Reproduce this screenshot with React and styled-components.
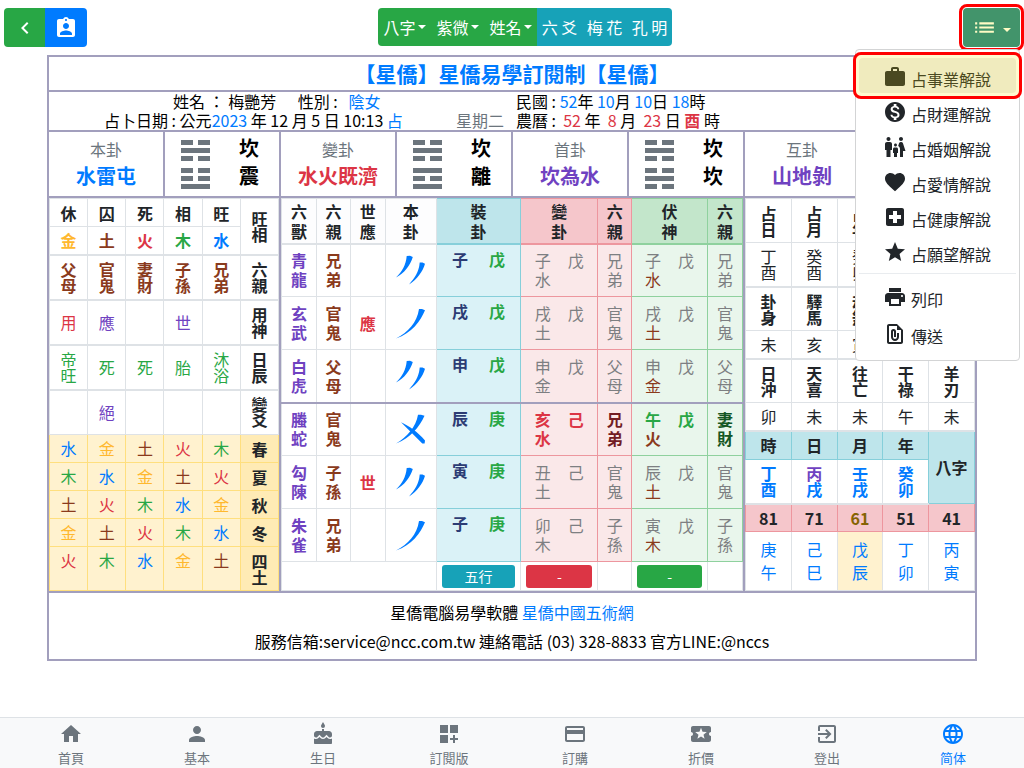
import React from "react";
import styled, { createGlobalStyle } from "styled-components";
import {
  MdChevronLeft,
  MdAssignmentInd,
  MdList,
  MdWork,
  MdMonetizationOn,
  MdFamilyRestroom,
  MdFavorite,
  MdLocalHospital,
  MdStar,
  MdPrint,
  MdOutlineFilePresent,
  MdHome,
  MdPerson,
  MdCake,
  MdDashboardCustomize,
  MdPayment,
  MdLocalActivity,
  MdExitToApp,
  MdLanguage,
} from "react-icons/md";

const colors = {
  blue: "#007bff",
  green: "#28a745",
  red: "#dc3545",
  gold: "#ffb82e",
  brown: "#8a3a1c",
  purple: "#6f42c1",
  navy: "#2c3c74",
  teal: "#17a2b8",
  gray: "#6c757d",
  mute: "#7d7f82",
  ink: "#212529",
  maroon: "#721c24",
  forest: "#155724",
  olive: "#856404",
  frame: "#a29fbd",
};

const tones = {
  plain: { bg: "transparent", line: "#dee2e6" },
  head: { bg: "#fdfdfe", line: "#dee2e6" },
  info: { bg: "#bee5eb", line: "#86cfda" },
  infoSoft: { bg: "#daf2f7", line: "#86cfda" },
  danger: { bg: "#f5c6cb", line: "#ed969e" },
  dangerSoft: { bg: "#fae8e9", line: "#ed969e" },
  success: { bg: "#c3e6cb", line: "#8fd19e" },
  successSoft: { bg: "#e9f6ec", line: "#8fd19e" },
  warn: { bg: "#ffebb5", line: "#ffdf7e" },
  warnSoft: { bg: "#fff2cf", line: "#ffdf7e" },
  warnCell: { bg: "#fff2cf", line: "#dee2e6" },
};

const regular = 400;
const strong = 700;

const GlobalStyle = createGlobalStyle`
  *, *::before, *::after { box-sizing: border-box; }
  body {
    margin: 0;
    background: #fff;
    color: #000;
    font-family: "Noto Sans CJK TC", sans-serif;
    font-size: 16px;
    font-weight: ${regular};
    line-height: 24px;
  }
  button { font: inherit; border: 0; margin: 0; cursor: pointer; }
  a { color: ${colors.blue}; text-decoration: none; }
`;

/* ---------- top bar ---------- */

const TopBar = styled.header`
  display: flex;
  justify-content: space-between;
  align-items: flex-start;
  padding: 8px 4px;
`;

const ButtonGroup = styled.div`
  display: flex;
  border-radius: 4px;
  overflow: hidden;
`;

const BarButton = styled.button`
  display: flex;
  align-items: center;
  justify-content: center;
  gap: ${(p) => (p.$wide ? "6px" : "2px")};
  width: ${(p) => p.$width}px;
  height: ${(p) => p.$height || 39}px;
  padding: 0;
  color: ${(p) => p.$color || "#fff"};
  background: ${(p) => p.$bg};
  border-radius: ${(p) => (p.$wide ? "4px" : "0")};
`;

const Caret = styled.span`
  margin-top: ${(p) => (p.$low ? 5 : 0)}px;
  border: 4px solid transparent;
  border-top-color: currentColor;
  border-bottom: 0;
`;

const MenuAnchor = styled.div`
  position: relative;
`;

const Marker = styled.span`
  position: absolute;
  inset: ${(p) => p.$inset};
  border: 3px solid #f00;
  border-radius: 8px;
  background: ${(p) => (p.$tinted ? "rgba(255, 230, 0, 0.19)" : "transparent")};
  pointer-events: none;
`;

const Menu = styled.nav`
  position: absolute;
  top: 41px;
  right: 0;
  z-index: 2;
  width: 165px;
  padding: 8px 3px 10px;
  background: #fff;
  border: 1px solid #d3d4d5;
  border-radius: 4px;
`;

const MenuItem = styled.a`
  position: relative;
  display: flex;
  align-items: flex-end;
  gap: 4px;
  height: ${(p) => (p.$tall ? 37 : 35)}px;
  padding: 0 24px 2px;
  color: ${colors.ink};
  white-space: nowrap;
  border-radius: 4px;
  background: ${(p) => (p.$active ? "#ededea" : "transparent")};
  svg { flex: none; margin-bottom: 2px; }
`;

const Divider = styled.hr`
  height: 1px;
  margin: 5px 0 2px;
  border: 0;
  background: #e9ecef;
`;

/* ---------- chart frame ---------- */

const Frame = styled.main`
  max-width: 930px;
  margin: 0 auto 60px;
  border: 2px solid ${colors.frame};
`;

const Title = styled.h1`
  margin: 0;
  height: 35px;
  font-size: 21px;
  line-height: 33px;
  font-weight: ${strong};
  text-align: center;
  color: ${colors.blue};
  border-bottom: 2px solid ${colors.frame};
`;

const Info = styled.section`
  display: grid;
  grid-template-columns: 1fr 1fr;
  line-height: 19px;
  height: 40px;
  border-bottom: 2px solid ${colors.frame};
`;

const InfoLine = styled.div`
  display: flex;
  white-space: pre;
  padding: 0 8px 0 ${(p) => p.$indent}px;
`;

const Push = styled.span`
  margin-left: auto;
  color: ${colors.gray};
`;

const Ink = styled.span`
  color: ${(p) => colors[p.$c]};
  font-weight: ${(p) => (p.$bold ? strong : "inherit")};
`;

const Hexagrams = styled.section`
  display: grid;
  grid-template-columns: repeat(7, 116fr) 114fr;
  height: 66px;
  border-bottom: 2px solid ${colors.frame};
`;

const HexName = styled.div`
  display: flex;
  flex-direction: column;
  align-items: center;
  justify-content: center;
  gap: 3px;
  padding-bottom: 3px;
  color: ${colors.gray};
  border-right: 2px solid ${colors.frame};
  strong { font-size: 20px; font-weight: ${strong}; color: ${(p) => colors[p.$c]}; }
`;

const HexLines = styled.div`
  display: flex;
  align-items: center;
  justify-content: space-between;
  padding: 0 20px 0 16px;
  border-right: 2px solid ${(p) => (p.$last ? "transparent" : colors.frame)};
`;

const HexWords = styled.div`
  display: flex;
  flex-direction: column;
  padding-bottom: 4px;
  font-size: 20px;
  line-height: 28px;
  font-weight: ${strong};
`;

const Panels = styled.section`
  display: grid;
  grid-template-columns: 232fr 464fr 230fr;
  border-bottom: 2px solid ${colors.frame};
`;

const Panel = styled.div`
  border-right: ${(p) => (p.$last ? 0 : 2)}px solid ${colors.frame};
`;

const Grid = styled.table`
  width: 100%;
  table-layout: fixed;
  border-collapse: collapse;
  color: ${colors.ink};
`;

const Row = styled.tr`
  height: ${(p) => p.$h}px;
`;

const cellStyle = (p) => {
  const t = tones[p.$tone || "plain"];
  return `
    padding: 0;
    text-align: center;
    vertical-align: ${p.$top ? "top" : "middle"};
    line-height: ${p.$lh || 16}px;
    color: ${colors[p.$c || "ink"]};
    background: ${t.bg};
    border: 1px solid ${t.line};
    ${p.$thick ? `border-bottom: 2px solid ${t.line};` : ""}
    ${p.$half ? `border-bottom: 2px solid ${colors.frame};` : ""}
  `;
};

const Th = styled.th`
  ${cellStyle}
  font-weight: ${strong};
`;

const Td = styled.td`
  ${cellStyle}
  font-weight: ${(p) => (p.$bold ? strong : regular)};
`;

const Stack = styled.span`
  display: flex;
  flex-direction: column;
  align-items: center;
`;

const Pair = styled.span`
  display: flex;
  justify-content: center;
  gap: ${(p) => p.$gap}px;
`;

const Badge = styled.button`
  display: block;
  width: calc(100% - 10px);
  height: 23px;
  margin: 0 auto;
  padding: 0;
  font-size: 14px;
  line-height: 23px;
  color: #fff;
  background: ${(p) => colors[p.$bg]};
  border-radius: 3px;
`;

const Contact = styled.footer`
  padding: 5px 0 3px;
  line-height: 29px;
  text-align: center;
  p { margin: 0; }
`;

/* ---------- bottom tabs ---------- */

const Tabs = styled.nav`
  position: fixed;
  inset: auto 0 0;
  display: flex;
  height: 51px;
  padding: 4px 8px 0;
  background: #f8f9fa;
  border-top: 1px solid #dee2e6;
`;

const Tab = styled.a`
  flex: 1;
  display: flex;
  flex-direction: column;
  align-items: center;
  gap: 2px;
  font-size: 13px;
  line-height: 20px;
  color: ${(p) => (p.$active ? colors.blue : colors.gray)};
`;

/* ---------- drawings ---------- */

// "1" is a solid bar, "0" a broken one, listed from top to bottom
function Trigrams({ lines }) {
  return (
    <svg width="29" height="49" viewBox="0 0 29 49" fill={colors.gray} aria-hidden="true">
      {lines.split("").map((v, i) => {
        const y = i * 8 + (i > 2 ? 4 : 0);
        return v === "1" ? (
          <rect key={i} x="0" y={y} width="29" height="5" />
        ) : (
          <g key={i}>
            <rect x="0" y={y} width="12" height="5" />
            <rect x="17" y={y} width="12" height="5" />
          </g>
        );
      })}
    </svg>
  );
}

const yaoPaths = {
  yin: [
    "M10.7 1 L14 0.8 L16.8 2 C14.5 10 8 18.5 0 22.6 C6 16.5 10 10 10.7 1Z",
    "M23.7 7.6 L26.5 7.6 L29 8.8 C27 16 21 25 13 29.4 C18.5 23.5 23 17 23.7 7.6Z",
  ],
  yang: ["M23 1 L26 1 L29 2.2 C24.5 13 16 25 0 30.5 C12 24.5 21 14.5 23 1Z"],
  moving: [
    "M22 0.7 L25 0.7 L28.5 1.8 C23.5 13 14.5 24 0 29.5 C11 23 20 13 22 0.7Z",
    "M5 8.2 C13 12 21.5 17.5 29 26.5 L28.6 29.4 L26.3 29.4 C19 22 12 15 5 8.2Z",
  ],
};

function Yao({ kind }) {
  return (
    <svg width="29" height="31" viewBox="0 0 29 31" fill={colors.blue} aria-hidden="true">
      {yaoPaths[kind].map((d) => (
        <path key={d} d={d} />
      ))}
    </svg>
  );
}

function Vertical({ text }) {
  return (
    <Stack>
      {text.split("").map((ch, i) => (
        <span key={i}>{ch}</span>
      ))}
    </Stack>
  );
}

/* ---------- data ---------- */

const hexagrams = [
  { label: "本卦", name: "水雷屯", c: "blue", lines: "010001", words: "坎震" },
  { label: "變卦", name: "水火既濟", c: "red", lines: "010101", words: "坎離" },
  { label: "首卦", name: "坎為水", c: "purple", lines: "010010", words: "坎坎" },
  { label: "互卦", name: "山地剝", c: "purple", lines: "", words: "" },
];

const elementColor = { 金: "gold", 土: "brown", 火: "red", 木: "green", 水: "blue" };

const relationRows = [
  { label: "六親", cells: ["父母", "官鬼", "妻財", "子孫", "兄弟"], colors: "brown", bold: true },
  { label: "用神", cells: ["用", "應", "", "世", ""], colors: ["red", "purple", "purple", "purple", "purple"] },
  { label: "日辰", cells: ["帝旺", "死", "死", "胎", "沐浴"], colors: "green" },
  { label: "變爻", cells: ["", "絕", "", "", ""], colors: "purple" },
];

const seasons = [
  ["春", "水金土火木"],
  ["夏", "木水金土火"],
  ["秋", "土火木水金"],
  ["冬", "金土火木水"],
  ["四土", "火木水金土"],
];

const yaoRows = [
  { beast: "青龍", kin: "兄弟", role: "", yao: "yin", own: "子戊", change: "子水戊", changeKin: "兄弟", hidden: "子水戊", hiddenKin: "兄弟" },
  { beast: "玄武", kin: "官鬼", role: "應", yao: "yang", own: "戌戊", change: "戌土戊", changeKin: "官鬼", hidden: "戌土戊", hiddenKin: "官鬼" },
  { beast: "白虎", kin: "父母", role: "", yao: "yin", own: "申戊", change: "申金戊", changeKin: "父母", hidden: "申金戊", hiddenKin: "父母", half: true },
  { beast: "螣蛇", kin: "官鬼", role: "", yao: "moving", own: "辰庚", change: "亥水己", changeKin: "兄弟", hidden: "午火戊", hiddenKin: "妻財", active: true },
  { beast: "勾陳", kin: "子孫", role: "世", yao: "yin", own: "寅庚", change: "丑土己", changeKin: "官鬼", hidden: "辰土戊", hiddenKin: "官鬼" },
  { beast: "朱雀", kin: "兄弟", role: "", yao: "yang", own: "子庚", change: "卯木己", changeKin: "子孫", hidden: "寅木戊", hiddenKin: "子孫" },
];

const yaoHeads = [
  ["六獸", "head"],
  ["六親", "head"],
  ["世應", "head"],
  ["本卦", "head"],
  ["裝卦", "info"],
  ["變卦", "danger"],
  ["六親", "danger"],
  ["伏神", "success"],
  ["六親", "success"],
];

const menuItems = [
  [MdWork, "占事業解說"],
  [MdMonetizationOn, "占財運解說"],
  [MdFamilyRestroom, "占婚姻解說"],
  [MdFavorite, "占愛情解說"],
  [MdLocalHospital, "占健康解說"],
  [MdStar, "占願望解說"],
];

const tabs = [
  [MdHome, "首頁"],
  [MdPerson, "基本"],
  [MdCake, "生日"],
  [MdDashboardCustomize, "訂閱版"],
  [MdPayment, "訂購"],
  [MdLocalActivity, "折價"],
  [MdExitToApp, "登出"],
  [MdLanguage, "简体"],
];

/* ---------- panels ---------- */

function SeasonTable() {
  return (
    <Grid>
      <tbody>
        <Row $h={28}>
          {"休囚死相旺".split("").map((ch) => (
            <Th key={ch}>{ch}</Th>
          ))}
          <Th rowSpan={2} $thick>
            <Vertical text="旺相" />
          </Th>
        </Row>
        <Row $h={28}>
          {"金土火木水".split("").map((ch) => (
            <Td key={ch} $bold $thick $c={elementColor[ch]}>{ch}</Td>
          ))}
        </Row>
        {relationRows.map((r) => (
          <Row key={r.label} $h={45}>
            {r.cells.map((text, i) => (
              <Td key={i} $thick={r.label !== "變爻"} $bold={r.bold} $c={Array.isArray(r.colors) ? r.colors[i] : r.colors}>
                <Vertical text={text} />
              </Td>
            ))}
            <Th $thick={r.label !== "變爻"}>
              <Vertical text={r.label} />
            </Th>
          </Row>
        ))}
        {seasons.map(([label, cells]) => (
          <Row key={label} $h={label.length > 1 ? 44 : 28}>
            {cells.split("").map((ch, i) => (
              <Td key={i} $tone="warnSoft" $top $lh={26} $c={elementColor[ch]}>{ch}</Td>
            ))}
            <Th $tone="warn">
              <Vertical text={label} />
            </Th>
          </Row>
        ))}
      </tbody>
    </Grid>
  );
}

function StemPair({ text, first, second, third }) {
  return (
    <Pair $gap={17}>
      <Stack>
        <Ink $c={first}>{text[0]}</Ink>
        <Ink $c={second}>{text[1]}</Ink>
      </Stack>
      <Ink $c={third}>{text[2]}</Ink>
    </Pair>
  );
}

function YaoTable() {
  return (
    <Grid>
      <colgroup>
        {[35, 34, 35, 51, 85, 77, 34, 76, 35].map((w, i) => (
          <col key={i} width={`${(w / 462) * 100}%`} />
        ))}
      </colgroup>
      <thead>
        <Row $h={45}>
          {yaoHeads.map(([text, tone], i) => (
            <Th key={i} $tone={tone} $lh={20} $thick>
              <Vertical text={text} />
            </Th>
          ))}
        </Row>
      </thead>
      <tbody>
        {yaoRows.map((r) => (
          <Row key={r.beast} $h={53}>
            <Td $half={r.half} $lh={19} $bold $c="purple"><Vertical text={r.beast} /></Td>
            <Td $half={r.half} $lh={19} $bold $c="brown"><Vertical text={r.kin} /></Td>
            <Td $half={r.half} $lh={19} $bold $c="red">{r.role}</Td>
            <Td $half={r.half}><Stack><Yao kind={r.yao} /></Stack></Td>
            <Td $half={r.half} $tone="infoSoft" $top $lh={28} $bold>
              <Pair $gap={21}>
                <Ink $c="navy">{r.own[0]}</Ink>
                <Ink $c="green">{r.own[1]}</Ink>
              </Pair>
            </Td>
            <Td $half={r.half} $tone="dangerSoft" $lh={19} $bold={r.active}>
              <StemPair
                text={r.change}
                first={r.active ? "red" : "mute"}
                second={r.active ? "red" : "mute"}
                third={r.active ? "red" : "mute"}
              />
            </Td>
            <Td $half={r.half} $tone="dangerSoft" $lh={19} $bold={r.active} $c={r.active ? "maroon" : "mute"}>
              <Vertical text={r.changeKin} />
            </Td>
            <Td $half={r.half} $tone="successSoft" $lh={19} $bold={r.active}>
              <StemPair
                text={r.hidden}
                first={r.active ? "green" : "mute"}
                second="brown"
                third={r.active ? "green" : "mute"}
              />
            </Td>
            <Td $half={r.half} $tone="successSoft" $lh={19} $bold={r.active} $c={r.active ? "forest" : "mute"}>
              <Vertical text={r.hiddenKin} />
            </Td>
          </Row>
        ))}
        <Row $h={29}>
          <Td colSpan={4} />
          <Td><Badge type="button" $bg="teal">五行</Badge></Td>
          <Td><Badge type="button" $bg="red">-</Badge></Td>
          <Td />
          <Td><Badge type="button" $bg="green">-</Badge></Td>
          <Td />
        </Row>
      </tbody>
    </Grid>
  );
}

function StarRow({ cells, head, h, thick }) {
  const Cell = head ? Th : Td;
  return (
    <Row $h={h}>
      {cells.map((text, i) => (
        <Cell key={i} $thick={thick}>
          <Vertical text={text} />
        </Cell>
      ))}
    </Row>
  );
}

function PillarTable() {
  return (
    <Grid>
      <tbody>
        <StarRow head h={44} cells={["占日", "占月", "占年", "", ""]} />
        <StarRow h={44} thick cells={["丁酉", "癸酉", "癸卯", "", ""]} />
        <StarRow head h={44} cells={["卦身", "驛馬", "劫煞", "", ""]} />
        <StarRow h={28} thick cells={["未", "亥", "寅", "", ""]} />
        <StarRow head h={44} cells={["日沖", "天喜", "往亡", "干祿", "羊刃"]} />
        <StarRow h={28} thick cells={["卯", "未", "未", "午", "未"]} />
        <Row $h={29}>
          {"時日月年".split("").map((ch) => (
            <Th key={ch} $tone="info">{ch}</Th>
          ))}
          <Th $tone="info" rowSpan={2}>八字</Th>
        </Row>
        <Row $h={44}>
          {["丁酉", "丙戌", "壬戌", "癸卯"].map((text, i) => (
            <Td key={text} $bold $thick $c="blue">
              <Stack>
                <Ink $c={i === 1 ? "purple" : "blue"}>{text[0]}</Ink>
                <span>{text[1]}</span>
              </Stack>
            </Td>
          ))}
        </Row>
        <Row $h={28}>
          {["81", "71", "61", "51", "41"].map((n) => (
            <Th key={n} $tone="danger" $c={n === "61" ? "olive" : "ink"}>{n}</Th>
          ))}
        </Row>
        <Row $h={59}>
          {["庚午", "己巳", "戊辰", "丁卯", "丙寅"].map((text, i) => (
            <Td key={text} $c="blue" $lh={23} $tone={i === 2 ? "warnCell" : "plain"}>
              <Vertical text={text} />
            </Td>
          ))}
        </Row>
      </tbody>
    </Grid>
  );
}

/* ---------- page ---------- */

export default function App() {
  return (
    <>
      <GlobalStyle />
      <TopBar>
        <ButtonGroup>
          <BarButton type="button" aria-label="返回" $width={41} $bg={colors.green}>
            <MdChevronLeft size={24} />
          </BarButton>
          <BarButton type="button" aria-label="個人資料" $width={42} $bg={colors.blue}>
            <MdAssignmentInd size={24} />
          </BarButton>
        </ButtonGroup>

        <ButtonGroup>
          {["八字", "紫微", "姓名"].map((t) => (
            <BarButton key={t} type="button" $width={53} $height={38} $bg={colors.green}>
              {t} <Caret />
            </BarButton>
          ))}
          {["六 爻", "梅 花", "孔 明"].map((t) => (
            <BarButton key={t} type="button" $width={45} $height={38} $bg={colors.teal}>
              {t}
            </BarButton>
          ))}
        </ButtonGroup>

        <MenuAnchor>
          <BarButton type="button" aria-label="選單" aria-expanded="true" $wide $width={57} $bg="#42946b" $color="#fffbc5">
            <MdList size={25} />
            <Caret $low />
          </BarButton>
          <Marker $inset="-4px" />
          <Menu>
            {menuItems.map(([Icon, text], i) => (
              <MenuItem key={text} href="#" $active={i === 0}>
                <Icon size={24} />
                {text}
                {i === 0 && <Marker $inset="-6px" $tinted />}
              </MenuItem>
            ))}
            <Divider />
            <MenuItem href="#" $tall><MdPrint size={24} />列印</MenuItem>
            <MenuItem href="#" $tall><MdOutlineFilePresent size={24} />傳送</MenuItem>
          </Menu>
        </MenuAnchor>
      </TopBar>

      <Frame>
        <Title>【星僑】星僑易學訂閱制【星僑】</Title>

        <Info>
          <InfoLine $indent={124}>
            {"姓名 ： 梅艷芳      性別 :   "}
            <Ink $c="blue">陰女</Ink>
          </InfoLine>
          <InfoLine $indent={4}>
            {"民國 : "}
            <Ink $c="blue">52</Ink>{"年 "}
            <Ink $c="blue">10</Ink>{"月 "}
            <Ink $c="blue">10</Ink>{"日 "}
            <Ink $c="blue">18</Ink>時
          </InfoLine>
          <InfoLine $indent={55}>
            {"占卜日期 : 公元"}
            <Ink $c="blue">2023</Ink>
            {" 年 12 月 5 日 10:13 "}
            <Ink $c="blue">占</Ink>
            <Push>星期二</Push>
          </InfoLine>
          <InfoLine $indent={4}>
            {"農曆 :  "}
            <Ink $c="red">52</Ink>{" 年  "}
            <Ink $c="red">8</Ink>{" 月  "}
            <Ink $c="red">23</Ink>{" 日 "}
            <Ink $c="red" $bold>酉</Ink>{" 時"}
          </InfoLine>
        </Info>

        <Hexagrams>
          {hexagrams.map((h, i) => (
            <React.Fragment key={h.label}>
              <HexName $c={h.c}>
                {h.label}
                <strong>{h.name}</strong>
              </HexName>
              <HexLines $last={i === 3}>
                <Trigrams lines={h.lines} />
                <HexWords>
                  <span>{h.words[0]}</span>
                  <span>{h.words[1]}</span>
                </HexWords>
              </HexLines>
            </React.Fragment>
          ))}
        </Hexagrams>

        <Panels>
          <Panel><SeasonTable /></Panel>
          <Panel><YaoTable /></Panel>
          <Panel $last><PillarTable /></Panel>
        </Panels>

        <Contact>
          <p>星僑電腦易學軟體 <a href="#">星僑中國五術網</a></p>
          <p>服務信箱:service@ncc.com.tw 連絡電話 (03) 328-8833 官方LINE:@nccs</p>
        </Contact>
      </Frame>

      <Tabs>
        {tabs.map(([Icon, text], i) => (
          <Tab key={text} href="#" $active={i === tabs.length - 1}>
            <Icon size={24} />
            {text}
          </Tab>
        ))}
      </Tabs>
    </>
  );
}
